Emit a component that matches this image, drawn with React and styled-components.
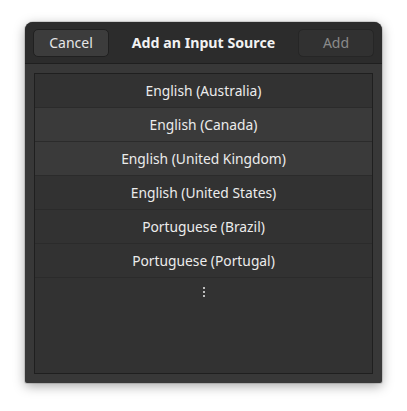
import React from "react";
import styled, { createGlobalStyle } from "styled-components";

const GlobalStyle = createGlobalStyle`
  html, body {
    margin: 0;
    padding: 0;
    background: #ffffff;
  }
  body {
    font-family: "Noto Sans", "Open Sans", sans-serif;
    -webkit-font-smoothing: antialiased;
  }
`;

const Page = styled.div`
  padding: 22px 25px 0 25px;
  width: 407px;
  height: 411px;
  box-sizing: border-box;
`;

const Dialog = styled.div`
  width: 357px;
  height: 361px;
  display: flex;
  flex-direction: column;
  background: #383838;
  border-radius: 8px 8px 2px 2px;
  box-shadow: 0 3px 12px rgba(0, 0, 0, 0.35), 0 0 0 1px rgba(0, 0, 0, 0.12);
  overflow: hidden;
`;

const HeaderBar = styled.div`
  height: 41px;
  flex: none;
  display: flex;
  align-items: center;
  justify-content: space-between;
  padding: 0 8px;
  background: #2c2c2c;
  border-bottom: 1px solid #1f1f1f;
`;

const Title = styled.div`
  color: #f2f2f2;
  font-size: 14.2px;
  font-weight: 700;
`;

const Button = styled.button`
  width: 76px;
  height: 28px;
  border-radius: 5px;
  border: 1px solid ${(p) => (p.disabled ? "#262626" : "#202020")};
  background: ${(p) => (p.disabled ? "#313131" : "#3c3c3c")};
  color: ${(p) => (p.disabled ? "#8a8a8a" : "#e6e6e6")};
  font-family: inherit;
  font-size: 14px;
  padding: 0;
  cursor: pointer;
`;

const Body = styled.div`
  flex: 1;
  padding: 9px;
  display: flex;
`;

const List = styled.div`
  flex: 1;
  display: flex;
  flex-direction: column;
  background: #323232;
  border: 1px solid #1f1f1f;
`;

const Row = styled.div`
  height: ${(p) => (p.h ? p.h : 34)}px;
  flex: none;
  display: flex;
  align-items: center;
  justify-content: center;
  box-sizing: border-box;
  border-bottom: 1px solid #2b2b2b;
  background: ${(p) => (p.highlight ? "#3a3a3a" : "#323232")};
  color: #ececec;
  font-size: 13.8px;
  padding-bottom: 1px;
`;

const MoreRow = styled(Row)`
  border-bottom: none;
  padding-bottom: 3px;
`;

const Dots = () => (
  <svg width="4" height="12" viewBox="0 0 4 12">
    <rect x="1" y="0" width="2" height="2" fill="#bdbdbd" />
    <rect x="1" y="4" width="2" height="2" fill="#bdbdbd" />
    <rect x="1" y="8" width="2" height="2" fill="#bdbdbd" />
  </svg>
);

const sources = [
  { name: "English (Australia)" },
  { name: "English (Canada)", highlight: true },
  { name: "English (United Kingdom)", highlight: true },
  { name: "English (United States)" },
  { name: "Portuguese (Brazil)" },
  { name: "Portuguese (Portugal)" },
];

export default function App() {
  return (
    <>
      <GlobalStyle />
      <Page>
        <Dialog>
          <HeaderBar>
            <Button>Cancel</Button>
            <Title>Add an Input Source</Title>
            <Button disabled>Add</Button>
          </HeaderBar>
          <Body>
            <List>
              {sources.map((s) => (
                <Row key={s.name} highlight={s.highlight}>
                  {s.name}
                </Row>
              ))}
              <MoreRow h={32}>
                <Dots />
              </MoreRow>
            </List>
          </Body>
        </Dialog>
      </Page>
    </>
  );
}
